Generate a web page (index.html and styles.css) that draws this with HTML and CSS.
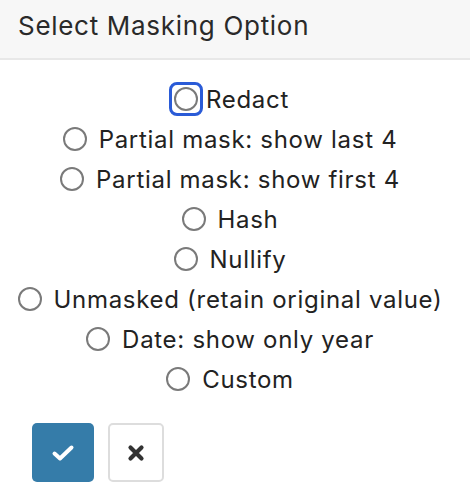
FILE: index.html
```html
<!DOCTYPE html>
<html>
<head>
<meta charset="utf-8">
<link rel="stylesheet" href="styles.css">
</head>
<body>
<div class="header">Select Masking Option</div>
<div class="options">
  <label class="opt"><span class="radio focus"></span>Redact</label>
  <label class="opt"><span class="radio"></span>Partial mask: show last 4</label>
  <label class="opt"><span class="radio"></span>Partial mask: show first 4</label>
  <label class="opt"><span class="radio"></span>Hash</label>
  <label class="opt"><span class="radio"></span>Nullify</label>
  <label class="opt"><span class="radio"></span>Unmasked (retain original value)</label>
  <label class="opt"><span class="radio"></span>Date: show only year</label>
  <label class="opt"><span class="radio"></span>Custom</label>
</div>
<div class="actions">
  <button class="btn ok"><svg width="24" height="18" viewBox="0 0 24 18"><path d="M3.5 9.5 L9 14.5 L20.5 3.5" fill="none" stroke="#fff" stroke-width="4" stroke-linecap="round" stroke-linejoin="round"/></svg></button>
  <button class="btn cancel"><svg width="20" height="20" viewBox="0 0 20 20"><path d="M4.5 4.5 L15.5 15.5 M15.5 4.5 L4.5 15.5" fill="none" stroke="#333" stroke-width="4.2" stroke-linecap="round"/></svg></button>
</div>
</body>
</html>
```
FILE: styles.css
```css
html, body { margin: 0; padding: 0; background: #fff; }
body { font-family: Inter, "Noto Sans", sans-serif; color: #222; width: 470px; }
.header {
  height: 58px;
  background: #f7f7f7;
  border-bottom: 2px solid #e8e8e8;
  font-size: 26px;
  letter-spacing: 0.7px;
  line-height: 52px;
  padding-left: 18px;
  color: #2a2a2a;
}
.options {
  width: 460px;
  display: flex;
  flex-direction: column;
  align-items: center;
  padding-top: 19px;
}
.opt {
  display: flex;
  align-items: center;
  height: 40px;
  font-size: 24px;
  letter-spacing: 0.7px;
  color: #222;
}
.radio {
  width: 20px;
  height: 20px;
  border: 2px solid #7a7a7a;
  border-radius: 50%;
  margin-right: 12px;
  box-sizing: content-box;
  position: relative;
}
.radio.focus { margin-right: 8px; margin-left: 3px; }
.radio.focus::after {
  content: "";
  position: absolute;
  left: -7px; top: -7px; right: -7px; bottom: -7px;
  border: 3.5px solid #2a5bd7;
  border-radius: 8px;
}
.actions {
  display: flex;
  gap: 14px;
  padding: 24px 0 0 32px;
}
.btn {
  height: 59px;
  border-radius: 5px;
  display: flex;
  align-items: center;
  justify-content: center;
  padding: 0;
}
.ok { width: 62px; background: #357ca9; border: none; }
.cancel { width: 56px; background: #fff; border: 2px solid #ddd; }
```
